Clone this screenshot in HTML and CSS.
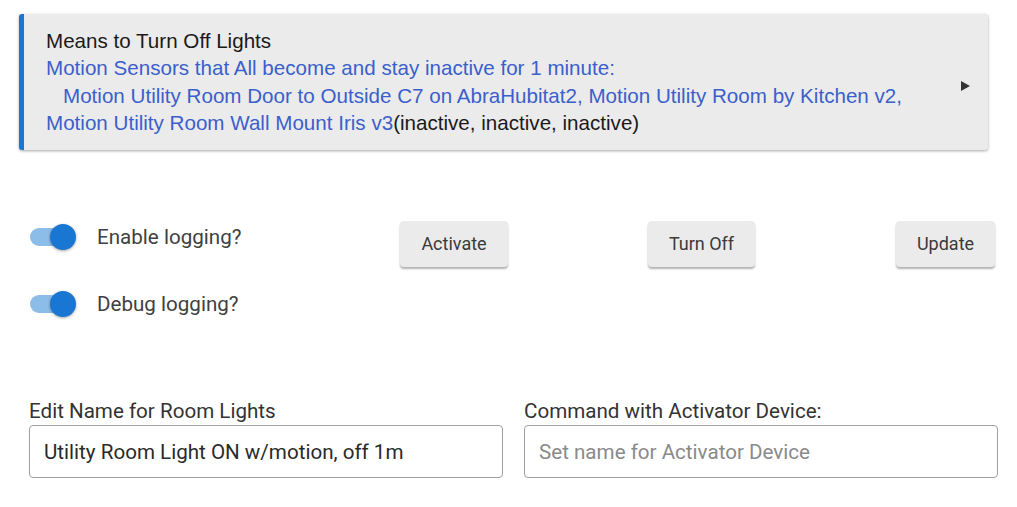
FILE: index.html
```html
<!DOCTYPE html>
<html lang="en">
<head>
    <meta charset="UTF-8">
    <meta name="viewport" content="width=device-width, initial-scale=1.0">
    <title>Room Lights</title>
    <link rel="stylesheet" href="styles.css">
</head>
<body>
    <div class="card">
        <div class="card-text">
            <div class="card-title">Means to Turn Off Lights</div>
            <div class="link">Motion Sensors that All become and stay inactive for 1 minute:</div>
            <div class="link indent">Motion Utility Room Door to Outside C7 on AbraHubitat2, Motion Utility Room by Kitchen v2,</div>
            <div><span class="link">Motion Utility Room Wall Mount Iris v3</span>(inactive, inactive, inactive)</div>
        </div>
        <span class="arrow"></span>
    </div>

    <div class="controls">
        <div class="toggles">
            <div class="toggle-row">
                <span class="switch"><span class="knob"></span></span>
                <span class="toggle-label">Enable logging?</span>
            </div>
            <div class="toggle-row">
                <span class="switch"><span class="knob"></span></span>
                <span class="toggle-label">Debug logging?</span>
            </div>
        </div>
        <button class="btn btn-activate">Activate</button>
        <button class="btn btn-off">Turn Off</button>
        <button class="btn btn-update">Update</button>
    </div>

    <div class="fields">
        <div class="field">
            <label for="roomName">Edit Name for Room Lights</label>
            <input type="text" id="roomName" value="Utility Room Light ON w/motion, off 1m">
        </div>
        <div class="field">
            <label for="activator">Command with Activator Device:</label>
            <input type="text" id="activator" placeholder="Set name for Activator Device">
        </div>
    </div>
</body>
</html>
```

FILE: styles.css
```css
body {
    margin: 0;
    padding: 14px 0 0 0;
    font-family: Roboto, "Liberation Sans", sans-serif;
    background: #fff;
}
.card {
    margin-left: 19px;
    width: 969px;
    height: 136px;
    box-sizing: border-box;
    background-color: #ebebeb;
    border-left: 5px solid #1976d2;
    border-radius: 3px;
    box-shadow: 0 1px 3px rgba(0, 0, 0, 0.35);
    display: flex;
    align-items: center;
    padding: 0 18px 0 22px;
}
.card-text {
    flex: 1;
    font-family: "Liberation Sans", Arial, sans-serif;
    font-size: 20.6px;
    line-height: 27.3px;
    color: #1a1a1a;
    margin-top: -1px;
}
.link {
    color: #3b5fcc;
}
.indent {
    padding-left: 17px;
}
.arrow {
    width: 0;
    height: 0;
    margin-top: 8px;
    border-top: 5px solid transparent;
    border-bottom: 5px solid transparent;
    border-left: 9px solid #333;
}
.controls {
    display: flex;
    align-items: flex-start;
    margin-top: 71px;
    padding-left: 30px;
}
.toggles {
    width: 370px;
    display: flex;
    flex-direction: column;
    gap: 41px;
    padding-top: 3px;
}
.toggle-row {
    display: flex;
    align-items: center;
    height: 26px;
}
.switch {
    position: relative;
    width: 45px;
    height: 18px;
    border-radius: 9px;
    background-color: #8cbde8;
    margin-right: 22px;
}
.knob {
    position: absolute;
    right: -1px;
    top: -4px;
    width: 26px;
    height: 26px;
    border-radius: 50%;
    background-color: #1976d2;
    box-shadow: 0 1px 3px rgba(0, 0, 0, 0.35);
}
.toggle-label {
    font-size: 20.6px;
    color: #404040;
}
.btn {
    font-family: Roboto, sans-serif;
    font-size: 18px;
    color: #3a3a3a;
    background-color: #ebebeb;
    border: none;
    border-radius: 4px;
    height: 46px;
    padding-bottom: 2px;
    box-shadow: 0 2px 2px rgba(0, 0, 0, 0.3);
}
.btn-activate {
    width: 108px;
}
.btn-off {
    width: 107px;
    margin-left: 140px;
}
.btn-update {
    width: 99px;
    margin-left: 141px;
}
.fields {
    display: flex;
    gap: 21px;
    margin-top: 82px;
    padding-left: 29px;
}
.field {
    display: flex;
    flex-direction: column;
    width: 474px;
}
.field label {
    font-size: 20.6px;
    line-height: 24px;
    color: #333;
    margin-bottom: 2px;
}
.field input {
    height: 53px;
    box-sizing: border-box;
    border: 1px solid #a0a0a0;
    border-radius: 4px;
    padding: 0 14px;
    font-family: Roboto, sans-serif;
    font-size: 20.6px;
    color: #2a2a2a;
}
.field input::placeholder {
    color: #8a8a8a;
}
```
